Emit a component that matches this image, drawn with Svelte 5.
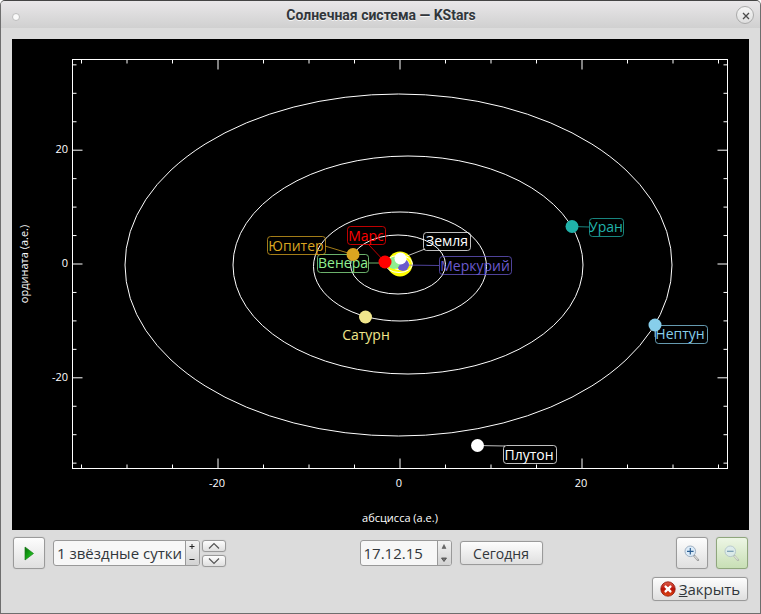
<script lang="ts">
  type Planet = {
    name: string;
    color: string;
    x: number;
    y: number;
    r: number;
    textX: number;
    textY: number;
    box?: { x: number; y: number; w: number };
    link?: [number, number];
  };

  // plot area, in svg units
  const left = 60.5;
  const right = 715.5;
  const top = 20.5;
  const bottom = 429.5;
  const originX = 388;
  const originY = 225;
  const auX = 9.1;
  const auY = 5.69;

  const ticks = [-35, -30, -25, -20, -15, -10, -5, 0, 5, 10, 15, 20, 25, 30, 35];

  const orbits = [
    { cx: 386.5, cy: 226, rx: 273.5, ry: 171 },
    { cx: 396, cy: 226, rx: 175, ry: 109 },
    { cx: 388, cy: 227.5, rx: 86.5, ry: 54.5 },
    { cx: 386, cy: 225.5, rx: 47.5, ry: 29.5 },
    { cx: 387, cy: 225, rx: 13.5, ry: 8.5 },
    { cx: 388, cy: 225, rx: 9, ry: 5.7 },
  ];

  const planets: Planet[] = [
    { name: "Меркурий", color: "#6a5acd", x: 391, y: 226, r: 6, textX: 463, textY: 232, box: { x: 427.5, y: 217.5, w: 72 }, link: [427, 226.5] },
    { name: "Венера", color: "#90ee90", x: 382, y: 224, r: 6, textX: 331, textY: 229, box: { x: 305.5, y: 215.5, w: 51 }, link: [357, 224] },
    { name: "Земля", color: "#ffffff", x: 388.5, y: 219.5, r: 6, textX: 435, textY: 207, box: { x: 411.5, y: 193.5, w: 47 }, link: [413, 210] },
    { name: "Марс", color: "#ff0000", x: 373, y: 223, r: 6.5, textX: 354, textY: 202, box: { x: 335.5, y: 187.5, w: 38 }, link: [357, 206] },
    { name: "Юпитер", color: "#daa520", x: 341, y: 215.5, r: 6.5, textX: 284, textY: 212, box: { x: 255.5, y: 197.5, w: 58 }, link: [313, 207] },
    { name: "Сатурн", color: "#f0e68c", x: 353.5, y: 278, r: 6.5, textX: 354, textY: 301 },
    { name: "Уран", color: "#20b2aa", x: 560, y: 187.5, r: 6.5, textX: 594, textY: 193, box: { x: 577.5, y: 179.5, w: 34 }, link: [577, 188] },
    { name: "Нептун", color: "#87ceeb", x: 643, y: 286, r: 6.5, textX: 668, textY: 300, box: { x: 643.5, y: 286.5, w: 52 }, link: [643, 298] },
    { name: "Плутон", color: "#ffffff", x: 465.5, y: 406.5, r: 6.5, textX: 517, textY: 421, box: { x: 491.5, y: 406.5, w: 53 }, link: [493, 407] },
  ];

  let step = $state("1 звёздные сутки");
  let date = $state("17.12.15");
</script>

<div class="window">
  <header class="titlebar">
    <span class="dot"></span>
    <h1>Солнечная система — KStars</h1>
    <button class="close" aria-label="Закрыть окно">
      <svg viewBox="0 0 18 18" width="18" height="18">
        <path d="M6 6 L12 12 M12 6 L6 12" stroke="#4a4a4a" stroke-width="1.3" />
      </svg>
    </button>
  </header>

  <main>
    <svg class="plot" viewBox="0 0 737 491" role="img" aria-label="Солнечная система">
      <circle cx={originX} cy={originY} r="12.5" fill="#ffff00" />
      {#each orbits as o}
        <ellipse class="orbit" cx={o.cx} cy={o.cy} rx={o.rx} ry={o.ry} />
      {/each}

      {#each ticks as t}
        {@const x = originX + t * auX}
        {@const y = originY - t * auY}
        {@const len = t % 20 === 0 ? 10 : 4}
        <path
          class="tick"
          d="M{x} {top}v{len} M{x} {bottom}v{-len} M{left} {y}h{len} M{right} {y}h{-len}"
        />
        {#if t % 20 === 0}
          <text class="scale" x={x - 1} y="448" text-anchor="middle">{t}</text>
          <text class="scale" x="56" y={y + 3} text-anchor="end">{t}</text>
        {/if}
      {/each}
      <rect class="frame" x={left} y={top} width={right - left} height={bottom - top} />

      <text class="axis" x="388" y="483" text-anchor="middle">абсцисса (а.е.)</text>
      <text class="axis" text-anchor="middle" transform="translate(16 225) rotate(-90)">
        ордината (а.е.)
      </text>

      {#each planets as p}
        {#if p.link}
          <line class="link" x1={p.x} y1={p.y} x2={p.link[0]} y2={p.link[1]} stroke={p.color} />
        {/if}
        {#if p.box}
          <rect class="box" x={p.box.x} y={p.box.y} width={p.box.w} height="18" rx="3" stroke={p.color} />
        {/if}
        <text class="name" x={p.textX} y={p.textY} text-anchor="middle" fill={p.color}>{p.name}</text>
      {/each}
      {#each planets as p}
        <circle cx={p.x} cy={p.y} r={p.r} fill={p.color} />
      {/each}
    </svg>

    <div class="toolbar">
      <div class="group">
        <button class="btn square play" aria-label="Пуск">
          <svg viewBox="0 0 16 16" width="16" height="16">
            <defs>
              <linearGradient id="play-fill" x1="0" y1="0" x2="1" y2="1">
                <stop offset="0" stop-color="#0a6d0a" />
                <stop offset="0.5" stop-color="#14a514" />
                <stop offset="1" stop-color="#3fd83f" />
              </linearGradient>
            </defs>
            <path d="M4 2 L12.5 8.5 L4 15 Z" fill="url(#play-fill)" stroke="#1b7d1b" stroke-width="0.7" />
          </svg>
        </button>
        <div class="spin">
          <input class="step" type="text" aria-label="Шаг времени" bind:value={step} />
          <div class="arrows">
            <button aria-label="Больше">
              <svg viewBox="0 0 12 12" width="12" height="12"><path d="M3.5 5.5h5M6 3v5" stroke="#222" /></svg>
            </button>
            <button aria-label="Меньше">
              <svg viewBox="0 0 12 12" width="12" height="12"><path d="M3.5 6.5h5" stroke="#222" /></svg>
            </button>
          </div>
        </div>
        <div class="units">
          <button class="btn unit" aria-label="Следующая единица">
            <svg viewBox="0 0 22 10" width="22" height="10"><path d="M6 7.5 L11 2.5 L16 7.5" /></svg>
          </button>
          <button class="btn unit" aria-label="Предыдущая единица">
            <svg viewBox="0 0 22 10" width="22" height="10"><path d="M6 2.5 L11 7.5 L16 2.5" /></svg>
          </button>
        </div>
      </div>

      <div class="group">
        <div class="spin">
          <input class="date" type="text" aria-label="Дата" bind:value={date} />
          <div class="arrows">
            <button aria-label="Позже">
              <svg viewBox="0 0 12 12" width="12" height="12"><path d="M6 3.5 L8 7.5 H4 Z" fill="#666" stroke="#555" stroke-width="0.5" /></svg>
            </button>
            <button aria-label="Раньше">
              <svg viewBox="0 0 12 12" width="12" height="12"><path d="M3.5 5 H8.5 L6 8.5 Z" fill="#777" stroke="#444" stroke-width="0.8" /></svg>
            </button>
          </div>
        </div>
        <button class="btn today">Сегодня</button>
      </div>

      <div class="group">
        <button class="btn square" aria-label="Увеличить">
          <svg viewBox="0 0 16 16" width="16" height="16">
            <path d="M10 10.5 L14 15" stroke="#9a9a9a" stroke-width="2.2" stroke-linecap="round" />
            <path d="M10.5 11 L13.7 14.5" stroke="#e4e4e4" stroke-width="1.1" />
            <circle cx="6.3" cy="6.3" r="5.3" fill="#dcebf8" stroke="#9fb0c2" />
            <path d="M3 6.3h6.6M6.3 3v6.6" stroke="#2c5f92" stroke-width="1.2" />
          </svg>
        </button>
        <button class="btn square active" aria-label="Уменьшить">
          <svg viewBox="0 0 16 16" width="16" height="16" opacity="0.65">
            <path d="M10 10.5 L14 15" stroke="#a5a5a5" stroke-width="2.2" stroke-linecap="round" />
            <path d="M10.5 11 L13.7 14.5" stroke="#eeeeee" stroke-width="1.1" />
            <circle cx="6.3" cy="6.3" r="5.3" fill="#dcebf8" stroke="#a5b8cb" />
            <path d="M3 6.3h6.6" stroke="#3d6f9f" stroke-width="1.2" />
          </svg>
        </button>
      </div>
    </div>

    <footer>
      <button class="btn dismiss">
        <svg viewBox="0 0 16 16" width="16" height="16">
          <defs>
            <linearGradient id="stop-fill" x1="0" y1="0" x2="0" y2="1">
              <stop offset="0" stop-color="#e0604a" />
              <stop offset="0.5" stop-color="#b91208" />
              <stop offset="1" stop-color="#e04a10" />
            </linearGradient>
          </defs>
          <circle cx="8" cy="8" r="7.2" fill="url(#stop-fill)" stroke="#8f1208" stroke-width="0.8" />
          <path d="M5.6 5.6 L10.4 10.4 M10.4 5.6 L5.6 10.4" stroke="#fff" stroke-width="2.4" stroke-linecap="round" />
        </svg>
        <span><u>З</u>акрыть</span>
      </button>
    </footer>
  </main>
</div>

<style>
  :global(body) {
    background: #fff;
  }
  .window {
    box-sizing: border-box;
    min-height: 100vh;
    background: #dcdcdc;
    border: 1px solid #6e6e6e;
    border-top-color: #444;
    border-radius: 5px 5px 0 0;
    overflow: hidden;
    font-family: "Open Sans", "Noto Sans", sans-serif;
    font-size: 14px;
    color: #31363b;
  }
  .titlebar {
    display: grid;
    grid-template-columns: 20px 1fr 20px;
    align-items: center;
    height: 27px;
    padding: 0 4px 0 5px;
    background: linear-gradient(#e9e7e9, #d0d0d0);
  }
  .dot {
    justify-self: center;
    width: 6px;
    height: 6px;
    margin-top: 5px;
    border: 1px solid #bdbdbd;
    border-radius: 50%;
    background: #fafafa;
  }
  h1 {
    margin: 0;
    font-family: Roboto, "Open Sans", sans-serif;
    font-size: 14px;
    line-height: 20px;
    font-weight: 700;
    text-align: center;
    text-shadow: 0 1px 0 #f4f4f4;
  }
  button {
    padding: 0;
    font: inherit;
    color: inherit;
  }
  svg {
    display: block;
    fill: none;
  }
  .close {
    width: 18px;
    height: 18px;
    border: 1px solid #aaa;
    border-radius: 50%;
    background: linear-gradient(#f6f6f6, #dedede);
    display: grid;
    place-items: center;
  }
  main {
    padding: 11px 11px 12px;
  }
  .plot {
    width: 100%;
    height: auto;
    background: #000;
  }
  .orbit,
  .frame,
  .tick {
    stroke: #fff;
  }
  .link,
  .box {
    stroke-opacity: 0.75;
  }
  .scale,
  .axis {
    fill: #fff;
    font-size: 11px;
  }
  .name {
    font-size: 14px;
  }
  .toolbar {
    display: flex;
    justify-content: space-between;
    align-items: center;
    padding: 7px 1px 8px;
  }
  .group {
    display: flex;
    align-items: center;
    gap: 8px;
  }
  .btn {
    box-sizing: border-box;
    border: 1px solid #9a9a9a;
    border-radius: 3px;
    background: linear-gradient(#fdfdfd, #dfdfdf);
    box-shadow: 0 0 1px #aaa;
    display: flex;
    align-items: center;
    justify-content: center;
  }
  .square {
    width: 32px;
    height: 32px;
  }
  .active {
    border-color: #8fa67c;
    background: linear-gradient(#edf6e5, #c8dfb5);
  }
  .spin {
    box-sizing: border-box;
    display: flex;
    height: 26px;
    border: 1px solid #999;
    border-radius: 3px;
    background: #f7f7f7;
    overflow: hidden;
  }
  .spin input {
    box-sizing: border-box;
    border: 0;
    padding: 0 3px;
    font: inherit;
    font-size: 15px;
    color: inherit;
    background: transparent;
    outline: none;
  }
  .step {
    width: 131px;
  }
  .date {
    width: 76px;
  }
  .arrows {
    display: flex;
    flex-direction: column;
    width: 13px;
    border-left: 1px solid #999;
    background: linear-gradient(#f2f2f2, #d2d2d2);
  }
  .arrows button {
    flex: 1;
    border: 0;
    background: none;
  }
  .units {
    display: flex;
    flex-direction: column;
    gap: 3px;
    margin-left: -6px;
  }
  .unit {
    width: 24px;
    height: 12px;
  }
  .unit path {
    stroke: #555;
    stroke-width: 1.2;
  }
  .today {
    width: 83px;
    height: 24px;
  }
  footer {
    display: flex;
    justify-content: flex-end;
    padding-right: 1px;
  }
  .dismiss {
    gap: 3px;
    width: 96px;
    height: 24px;
    font-size: 15px;
  }
</style>
